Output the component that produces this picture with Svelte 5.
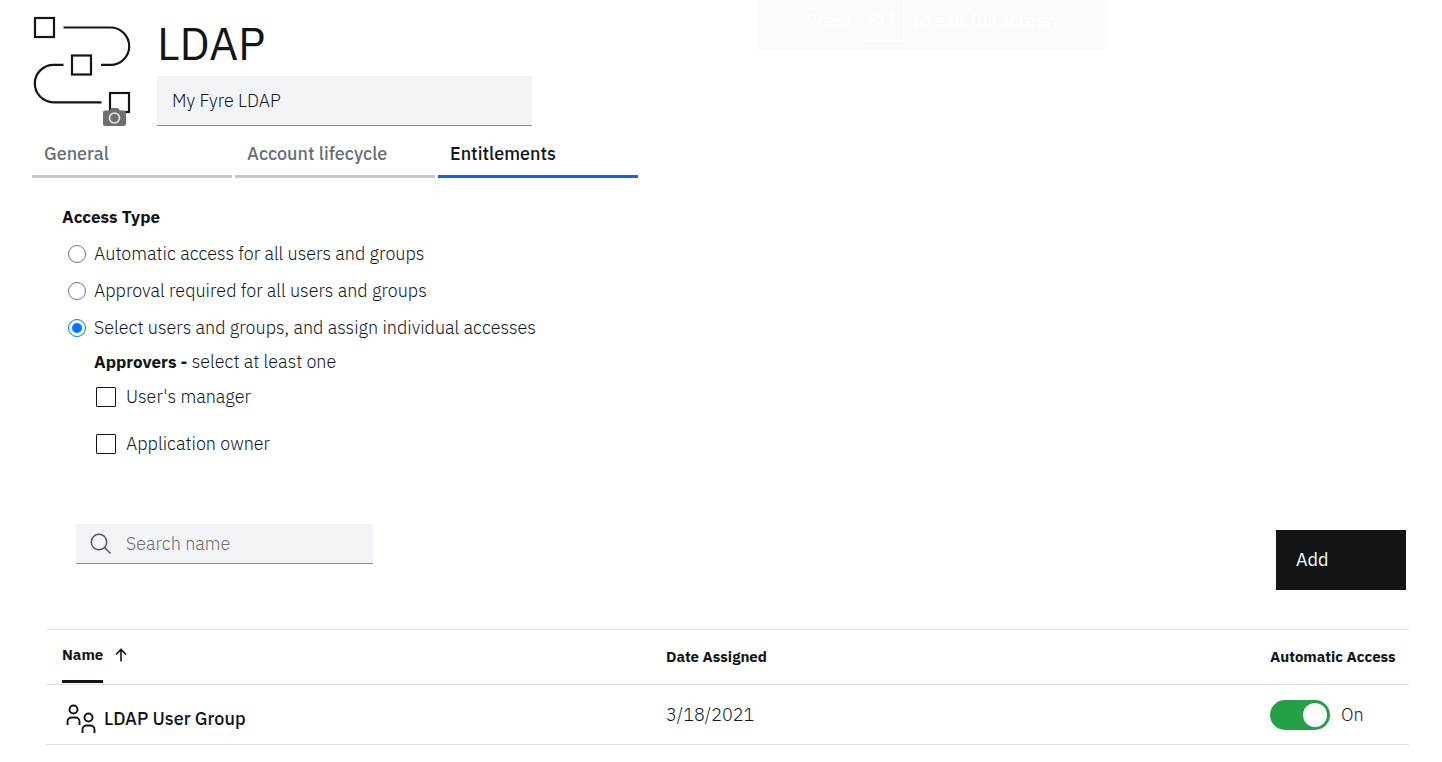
<script lang="ts">
	type Row = {
		name: string;
		date: string;
		automatic: boolean;
	};

	let applicationName = $state('My Fyre LDAP');
	let activeTab = $state('Entitlements');
	let accessType = $state('select');
	let approvers = $state<string[]>([]);
	let search = $state('');
	let ascending = $state(true);
	let rows = $state<Row[]>([{ name: 'LDAP User Group', date: '3/18/2021', automatic: true }]);

	const tabs = ['General', 'Account lifecycle', 'Entitlements'];

	const accessTypes = [
		{ value: 'automatic', label: 'Automatic access for all users and groups' },
		{ value: 'approval', label: 'Approval required for all users and groups' },
		{ value: 'select', label: 'Select users and groups, and assign individual accesses' }
	];

	const approverOptions = [
		{ value: 'manager', label: "User's manager" },
		{ value: 'owner', label: 'Application owner' }
	];

	let visibleRows = $derived(
		rows
			.filter((row) => row.name.toLowerCase().includes(search.toLowerCase()))
			.sort((a, b) => a.name.localeCompare(b.name) * (ascending ? 1 : -1))
	);
</script>

<div class="toast">Press <kbd>F11</kbd> to exit full screen</div>

<header>
	<button class="logo" aria-label="Change application icon">
		<svg width="100" height="114" viewBox="0 0 100 114" fill="none" stroke="#121619" stroke-width="2.2">
			<rect x="3" y="4" width="19" height="19" />
			<rect x="40" y="41.500" width="19" height="19" />
			<rect x="78" y="79" width="19" height="19" />
			<path d="M31.500 13.500H78.500a18.700 18.700 0 0 1 0 37.400H69" />
			<path d="M31.500 50.900H21.500a18.700 18.700 0 0 0 0 37.400H69.500" />
			<path
				d="M73 96.500h4.500l2-2.500h6.500l2 2.500h3.500a2.500 2.500 0 0 1 2.500 2.500v10.500a2.500 2.500 0 0 1-2.500 2.500H73.500a2.500 2.500 0 0 1-2.500-2.500V98.500a2 2 0 0 1 2-2z"
				fill="#6f6f6f"
				stroke="none"
			/>
			<circle cx="82.500" cy="104" r="5" stroke="#e8e8e8" stroke-width="1.600" />
		</svg>
	</button>
	<div class="title">
		<h1>LDAP</h1>
		<input type="text" aria-label="Application name" bind:value={applicationName} />
	</div>
</header>

<nav>
	{#each tabs as tab}
		<button class:active={activeTab === tab} onclick={() => (activeTab = tab)}>{tab}</button>
	{/each}
</nav>

<main>
	<section class="access">
		<h2>Access Type</h2>
		{#each accessTypes as type}
			<label class="radio">
				<input type="radio" name="access" value={type.value} bind:group={accessType} />
				{type.label}
			</label>
		{/each}
		<div class="approvers">
			<p><strong>Approvers -</strong> select at least one</p>
			{#each approverOptions as option}
				<label class="checkbox">
					<input type="checkbox" value={option.value} bind:group={approvers} />
					{option.label}
				</label>
			{/each}
		</div>
	</section>

	<div class="toolbar">
		<label class="search">
			<svg width="22" height="22" viewBox="0 0 22 22" fill="none" stroke="#4d5358" stroke-width="1.400">
				<circle cx="9" cy="9" r="7.700" />
				<path d="M14.500 14.500L20.500 20.500" />
			</svg>
			<input type="text" placeholder="Search name" aria-label="Search name" bind:value={search} />
		</label>
		<button class="add">Add</button>
	</div>

	<table>
		<thead>
			<tr>
				<th class="name">
					<button class="sort" onclick={() => (ascending = !ascending)}>
						<span>Name</span>
						<svg class:descending={!ascending} width="12" height="14" viewBox="0 0 12 14" fill="none" stroke="#121619" stroke-width="1.600">
							<path d="M6 13.500V1.500M1 6.500l5-5 5 5" />
						</svg>
					</button>
				</th>
				<th>Date Assigned</th>
				<th class="automatic">Automatic Access</th>
			</tr>
		</thead>
		<tbody>
			{#each visibleRows as row}
				<tr>
					<td>
						<div class="group">
							<svg width="30" height="30" viewBox="0 0 30 30" fill="none" stroke="#121619" stroke-width="1.900">
								<circle cx="7.500" cy="5.500" r="4" />
								<path d="M1.500 21v-3.500a4 4 0 0 1 4-4h4a4 4 0 0 1 4 4V21" />
								<circle cx="22.500" cy="13.500" r="4" />
								<path d="M16.500 29v-3.500a4 4 0 0 1 4-4h4a4 4 0 0 1 4 4V29" />
							</svg>
							{row.name}
						</div>
					</td>
					<td>{row.date}</td>
					<td>
						<label class="toggle">
							<input type="checkbox" role="switch" bind:checked={row.automatic} />
							{row.automatic ? 'On' : 'Off'}
						</label>
					</td>
				</tr>
			{/each}
		</tbody>
	</table>
</main>

<style>
	:global(body) {
		background: #fff;
		color: #121619;
		font-family: 'IBM Plex Sans', Roboto, 'Liberation Sans', sans-serif;
		font-size: 18px;
		font-weight: 300;
		line-height: 24px;
	}

	button,
	input {
		border: 0;
		border-radius: 0;
		box-sizing: border-box;
		color: inherit;
		font: inherit;
		margin: 0;
		padding: 0;
	}

	button {
		background: none;
		cursor: pointer;
		text-align: left;
	}

	svg {
		display: block;
		flex-shrink: 0;
	}

	h1,
	h2,
	p {
		margin: 0;
	}

	.toast {
		align-items: center;
		background: #fafafa;
		box-sizing: border-box;
		color: #fff;
		display: flex;
		font-family: 'Open Sans', sans-serif;
		font-weight: 400;
		gap: 9px;
		height: 50px;
		justify-content: center;
		left: 758px;
		padding-bottom: 11px;
		position: absolute;
		top: 0;
		width: 347px;
	}

	kbd {
		border: 1px solid #fff;
		border-radius: 2px;
		font: inherit;
		padding: 8px 6px;
	}

	header {
		display: flex;
		gap: 25px;
		padding: 14px 32px 0;
	}

	.title {
		flex: 0 1 375px;
	}

	h1 {
		font-size: 45px;
		font-weight: 400;
		line-height: 58px;
		padding-bottom: 4px;
	}

	.title input {
		background: #f2f4f8;
		border-bottom: 1px solid #878d96;
		height: 50px;
		padding: 0 15px;
		width: 100%;
	}

	nav {
		display: flex;
		gap: 3px;
		padding: 2px 32px 0;
	}

	nav button {
		border-bottom: 3px solid #c1c7cd;
		color: #697077;
		font-weight: 500;
		height: 48px;
		padding: 2px 12px 0;
		width: 200px;
	}

	nav button.active {
		border-color: #0f62fe;
		color: #121619;
	}

	main {
		padding: 27px 33px 0 46px;
	}

	.access {
		padding-left: 16px;
	}

	h2 {
		font-size: 17px;
		font-weight: 700;
		line-height: 24px;
		margin-bottom: 6px;
	}

	.radio {
		align-items: center;
		display: flex;
		gap: 8px;
		height: 37px;
		padding-left: 6px;
	}

	.radio input {
		appearance: none;
		border: 1px solid #767676;
		border-radius: 50%;
		height: 18px;
		width: 18px;
	}

	.radio input:checked {
		background: #0075ff;
		background-clip: content-box;
		border-color: #0075ff;
		padding: 3px;
	}

	.approvers {
		padding: 5px 0 0 32px;
	}

	p {
		line-height: 22px;
	}

	strong {
		font-size: 17px;
		font-weight: 700;
	}

	.checkbox {
		align-items: center;
		display: flex;
		gap: 10px;
		height: 47px;
		padding-left: 2px;
	}

	.checkbox input {
		appearance: none;
		border: 1px solid #121619;
		border-radius: 1px;
		height: 20px;
		width: 20px;
	}

	.checkbox input:checked {
		background: #121619;
	}

	.toolbar {
		align-items: flex-start;
		display: flex;
		justify-content: space-between;
		padding: 57px 3px 39px 30px;
	}

	.search {
		align-items: center;
		background: #f2f4f8;
		border-bottom: 1px solid #878d96;
		box-sizing: border-box;
		display: flex;
		flex: 0 1 297px;
		gap: 14px;
		height: 40px;
		padding: 0 14px;
	}

	.search input {
		background: none;
		min-width: 0;
		width: 100%;
	}

	.search input::placeholder {
		color: #6f6f6f;
		opacity: 1;
	}

	.add {
		background: #121619;
		color: #fff;
		font-weight: 400;
		height: 60px;
		margin-top: 6px;
		padding: 0 20px;
		width: 130px;
	}

	table {
		border-collapse: collapse;
		table-layout: fixed;
		width: 100%;
	}

	tr {
		border-bottom: 1px solid #dde1e6;
		border-top: 1px solid #dde1e6;
	}

	th {
		box-sizing: border-box;
		font-size: 15px;
		font-weight: 700;
		height: 55px;
		padding: 0 0 0 16px;
		text-align: left;
		white-space: nowrap;
	}

	th.name {
		vertical-align: top;
	}

	th.automatic {
		width: 155px;
	}

	td {
		height: 59px;
		padding: 0 0 0 16px;
	}

	.sort {
		align-items: center;
		display: flex;
		gap: 12px;
	}

	.sort span {
		border-bottom: 3px solid #121619;
		line-height: 50px;
	}

	.sort svg {
		margin-bottom: 3px;
	}

	.descending {
		transform: rotate(180deg);
	}

	.group {
		align-items: center;
		display: flex;
		font-weight: 500;
		gap: 8px;
		padding: 8px 0 0 4px;
	}

	.toggle {
		align-items: center;
		display: flex;
		gap: 11px;
	}

	.toggle input {
		appearance: none;
		background: #8d8d8d;
		border-radius: 15px;
		display: flex;
		height: 30px;
		padding: 3px;
		width: 60px;
	}

	.toggle input::before {
		background: #fff;
		border-radius: 50%;
		content: '';
		height: 24px;
		width: 24px;
	}

	.toggle input:checked {
		background: #24a148;
		justify-content: flex-end;
	}
</style>
